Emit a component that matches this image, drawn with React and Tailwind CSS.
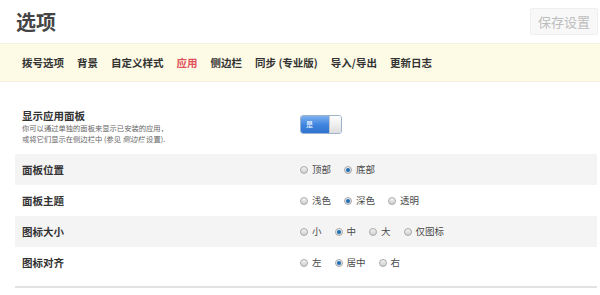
const tabs = ['拨号选项', '背景', '自定义样式', '应用', '侧边栏', '同步 (专业版)', '导入/导出', '更新日志'];

const rows = [
  { label: '面板位置', options: ['顶部', '底部'], selected: 1, gray: true },
  { label: '面板主题', options: ['浅色', '深色', '透明'], selected: 1 },
  { label: '图标大小', options: ['小', '中', '大', '仅图标'], selected: 1, gray: true },
  { label: '图标对齐', options: ['左', '居中', '右'], selected: 1 },
];

function Radio({ checked, label }) {
  return (
    <label className="flex items-center gap-[4px]">
      <span className="w-[8px] h-[8px] rounded-full border border-[#a9a9a9] bg-gradient-to-b from-[#f4f4f4] to-[#cfcfcf] flex items-center justify-center">
        {checked && <span className="w-[4px] h-[4px] rounded-full bg-[#1d6fb5]" />}
      </span>
      <span className="text-[9.5px] text-[#4a4a4a]">{label}</span>
    </label>
  );
}

function Toggle() {
  return (
    <div className="flex w-[42px] h-[19px] rounded-[3px] border border-[#9db4cf] overflow-hidden">
      <div className="w-[28px] bg-gradient-to-b from-[#7fb0ee] via-[#3f86e0] to-[#2f74d0] flex items-center pl-[5px]">
        <span className="text-[7px] text-white leading-none">是</span>
      </div>
      <div className="flex-1 bg-gradient-to-b from-[#ffffff] to-[#dedede] border-l border-[#c8c8c8]" />
    </div>
  );
}

export default function App() {
  return (
    <div className="w-[600px] h-[295px] bg-white overflow-hidden" style={{ fontFamily: '"Noto Sans CJK SC", "Noto Sans", sans-serif' }}>
      <div className="flex items-center justify-between pl-[16px] pr-[2px] h-[43px]">
        <h1 className="text-[20px] font-bold text-[#444] leading-none">选项</h1>
        <button className="h-[27px] w-[68px] bg-[#f8f8f8] border border-[#efefef] rounded-[2px] text-[13px] text-[#bdbdbd]">
          保存设置
        </button>
      </div>

      <nav className="h-[39px] bg-[#fdfbe6] border-t border-b border-[#f4f1e0] flex items-center gap-[13px] pl-[22px]">
        {tabs.map((t) => (
          <span key={t} className={`text-[10.5px] font-bold whitespace-nowrap ${t === '应用' ? 'text-[#e0525e]' : 'text-[#333]'}`}>
            {t}
          </span>
        ))}
      </nav>

      <div className="pl-[15px] pr-[3px] pt-[24px]">
        <div className="flex h-[48px]">
          <div className="w-[285px] pl-[7px] pt-[4px]">
            <div className="text-[10.5px] font-bold text-[#333] leading-[12px]">显示应用面板</div>
            <div className="text-[7.3px] text-[#666] leading-[11px] mt-[1px]">
              你可以通过单独的面板来显示已安装的应用，
              <br />
              或将它们显示在侧边栏中 (参见 <i>侧边栏</i> 设置).
            </div>
          </div>
          <div className="pt-[9px]">
            <Toggle />
          </div>
        </div>

        {rows.map((r) => (
          <div key={r.label} className={`flex items-center h-[31px] ${r.gray ? 'bg-[#f4f4f4]' : ''}`}>
            <div className="w-[285px] pl-[7px] text-[10.5px] font-bold text-[#333]">{r.label}</div>
            <div className="flex items-center gap-[13px]">
              {r.options.map((o, i) => (
                <Radio key={o} label={o} checked={i === r.selected} />
              ))}
            </div>
          </div>
        ))}

        <div className="mt-[8px] border-t-2 border-[#e2e2e2]" />
      </div>
    </div>
  );
}
